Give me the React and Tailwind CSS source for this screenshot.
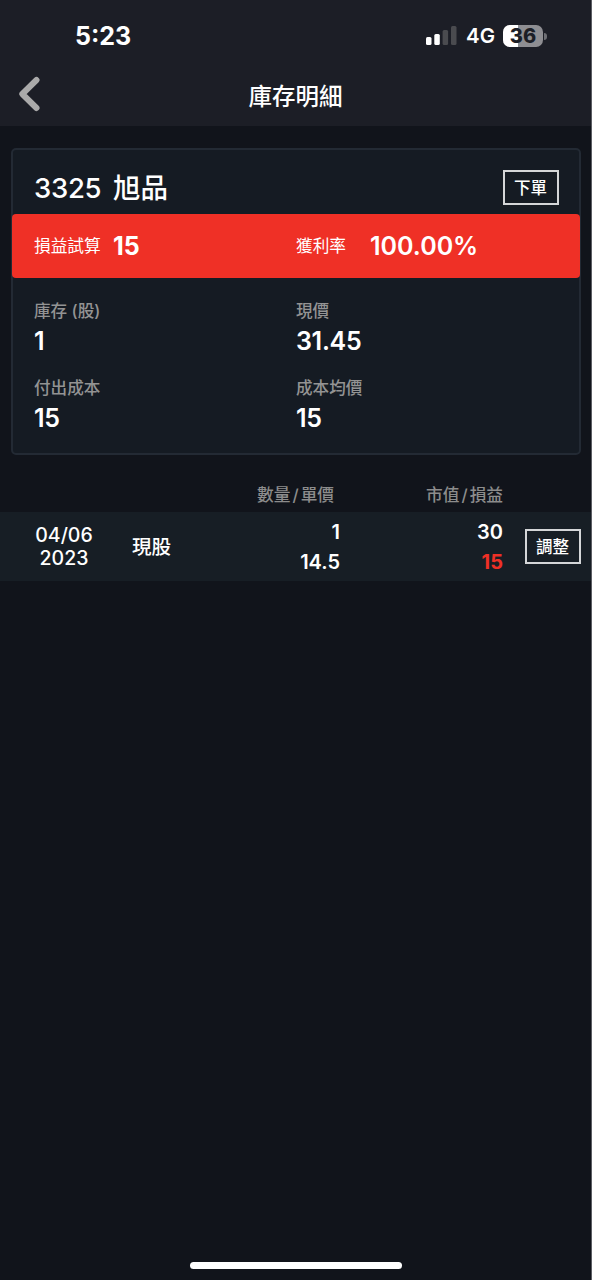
import clsx from 'clsx';

const STOCK = {
  code: '3325',
  name: '旭品',
  profit: '15',
  profitRate: '100.00%',
};

const FIELDS = [
  { label: '庫存 (股)', value: '1' },
  { label: '現價', value: '31.45' },
  { label: '付出成本', value: '15' },
  { label: '成本均價', value: '15' },
];

const LOTS = [
  { date: '04/06', year: '2023', type: '現股', qty: '1', price: '14.5', value: '30', profit: '15' },
];

function StatusBar() {
  return (
    <div className="flex h-[70px] items-start justify-between pt-[23px] pr-[44px] pl-[75px]">
      <span className="text-[25px] leading-[26px] font-bold">5:23</span>
      <div className="flex h-[26px] items-center">
        <svg className="mr-[9px] h-[20px] w-[31px]" viewBox="0 0 31 20">
          <rect x="0" y="11" width="5.5" height="8" rx="1.5" fill="#fff" />
          <rect x="8.3" y="8" width="5.5" height="11" rx="1.5" fill="#fff" />
          <rect x="16.6" y="4" width="5.5" height="15" rx="1.5" fill="#4a4b4f" />
          <rect x="25" y="0" width="5.5" height="19" rx="1.5" fill="#4a4b4f" />
        </svg>
        <span className="mr-[8px] w-[29px] text-[20.5px] leading-[26px] font-semibold">4G</span>
        <div className="relative h-[22px] w-[40px] overflow-hidden rounded-[7px] bg-[#8e8e92]">
          <div className="h-full w-[15px] bg-white" />
          <span className="absolute inset-0 text-center text-[20px] leading-[22px] font-extrabold text-[#1c1e26]">36</span>
        </div>
        <div className="ml-[1px] h-[7px] w-[3px] rounded-r-full bg-[#6e6f74]" />
      </div>
    </div>
  );
}

function Header() {
  return (
    <header className="h-[126px] bg-[#1c1e26]">
      <StatusBar />
      <div className="grid grid-cols-[100px_1fr_100px] items-start">
        <button className="pt-[6px] pl-[18px]" aria-label="返回">
          <svg className="h-[36px] w-[23px]" viewBox="0 0 23 36" fill="none" stroke="#aaaaaa" strokeWidth="6" strokeLinecap="round" strokeLinejoin="round">
            <path d="M18.5 4 L4.3 18 L18.5 32" />
          </svg>
        </button>
        <h1 className="pt-[15px] text-center text-[23.5px] leading-[24px] font-medium">庫存明細</h1>
      </div>
    </header>
  );
}

function OutlineButton({ children, className }) {
  return (
    <button
      className={clsx(
        'h-[35px] w-[56px] shrink-0 border-2 border-[#d4d6d8] pt-px pr-px text-[16.5px] leading-[30px] font-medium',
        className,
      )}
    >
      {children}
    </button>
  );
}

function SummaryCard() {
  return (
    <section className="mr-[10px] ml-[11px] mt-[22px] h-[307px] rounded-[5px] border-2 border-[#232a34] bg-[#151b23]">
      <div className="flex h-[64px] items-start justify-between pr-[20px] pl-[21px]">
        <div className="flex gap-[12px] pt-[22px] text-[27.5px] leading-[32px] font-medium">
          <span className="w-[67px] tracking-[-0.3px]">{STOCK.code}</span>
          <span>{STOCK.name}</span>
        </div>
        <OutlineButton className="mt-[20px]">下單</OutlineButton>
      </div>

      {/* Profit band */}
      <div className="-mx-px grid h-[64px] grid-cols-[262px_1fr] items-center rounded-[4px] bg-[#ef3026] pt-[2px] pl-[22px]">
        <div className="flex items-center">
          <span className="w-[79px] text-[16.7px]">損益試算</span>
          <span className="text-[25px] font-bold">{STOCK.profit}</span>
        </div>
        <div className="flex items-center">
          <span className="w-[74px] text-[16.7px]">獲利率</span>
          <span className="text-[25px] font-semibold">{STOCK.profitRate}</span>
        </div>
      </div>

      <dl className="grid grid-cols-[262px_1fr] gap-y-[17px] pt-[20px] pl-[21px]">
        {FIELDS.map((f) => (
          <div key={f.label} className="h-[60px]">
            <dt className="text-[16.6px] leading-[26px] font-medium text-[#939393]">{f.label}</dt>
            <dd className="text-[25px] leading-[35px] font-semibold tracking-[-0.3px]">{f.value}</dd>
          </div>
        ))}
      </dl>
    </section>
  );
}

function LotTable() {
  return (
    <section>
      <div className="grid h-[57px] grid-cols-[340px_163px] pt-[27px] text-right text-[16.7px] leading-[26px] font-medium text-[#8c8c8c]">
        <span className="pr-[6px]">數量<span className="px-[2px]">/</span>單價</span>
        <span>市值<span className="px-[2px]">/</span>損益</span>
      </div>
      {LOTS.map((lot) => (
        <div
          key={lot.date}
          className="grid h-[69px] grid-cols-[128px_112px_100px_163px_88px] items-center bg-[#171e25]"
        >
          <div className="text-center text-[19.5px] leading-[23px] font-medium">
            <div>{lot.date}</div>
            <div>{lot.year}</div>
          </div>
          <div className="pt-[2px] pl-[4px] text-[19.5px] font-medium">{lot.type}</div>
          <div className="text-right text-[20px] leading-[30px] font-semibold">
            <div>{lot.qty}</div>
            <div>{lot.price}</div>
          </div>
          <div className="text-right text-[20px] leading-[30px] font-semibold">
            <div>{lot.value}</div>
            <div className="font-bold text-[#ef3026]">{lot.profit}</div>
          </div>
          <OutlineButton className="ml-[22px]">調整</OutlineButton>
        </div>
      ))}
    </section>
  );
}

export default function App() {
  return (
    <div className="h-[1280px] w-[592px] overflow-hidden bg-[#5c5e64] pr-px font-['Inter','Noto_Sans_CJK_TC',sans-serif] text-white">
      <main className="flex h-full flex-col bg-[#11141b]">
        <Header />
        <SummaryCard />
        <LotTable />
        <div className="mx-auto mt-auto mb-[11px] h-[7px] w-[212px] rounded-full bg-white" />
      </main>
    </div>
  );
}
